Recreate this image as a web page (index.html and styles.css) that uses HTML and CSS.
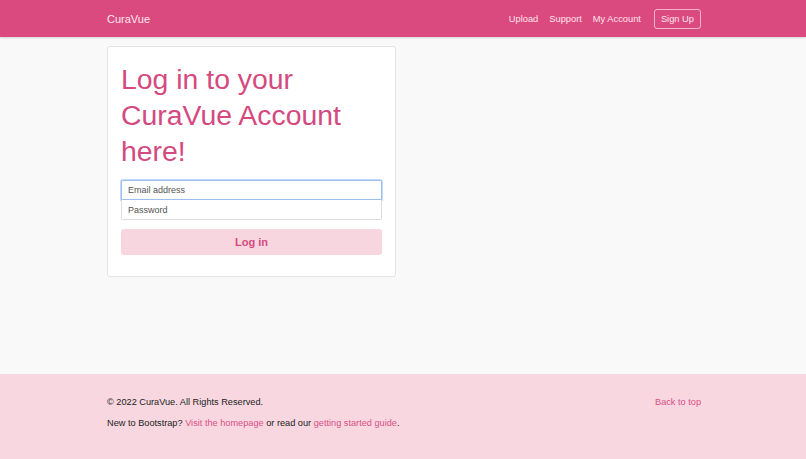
FILE: index.html
```html
<!DOCTYPE html>
<html lang="en">
<head>
    <meta charset="UTF-8">
    <meta name="viewport" content="width=device-width, initial-scale=1.0">
    <title>CuraVue - Log in</title>
    <link rel="stylesheet" href="styles.css">
</head>
<body>
    <header class="navbar">
        <div class="wrap nav-inner">
            <a class="brand" href="#">CuraVue</a>
            <nav class="nav-links">
                <a href="#">Upload</a>
                <a href="#">Support</a>
                <a href="#">My Account</a>
                <a class="signup" href="#">Sign Up</a>
            </nav>
        </div>
    </header>

    <main class="page">
        <div class="wrap">
            <div class="card">
                <h1>Log in to your CuraVue Account here!</h1>
                <form class="login-form">
                    <input type="email" class="field focused" placeholder="Email address">
                    <input type="password" class="field" placeholder="Password">
                    <button type="button" class="login-btn">Log in</button>
                </form>
            </div>
        </div>
    </main>

    <footer class="footer">
        <div class="wrap">
            <p class="top-line">
                <span>&copy; 2022 CuraVue. All Rights Reserved.</span>
                <a href="#">Back to top</a>
            </p>
            <p>New to Bootstrap? <a href="#">Visit the homepage</a> or read our <a href="#">getting started guide</a>.</p>
        </div>
    </footer>
</body>
</html>
```

FILE: styles.css
```css
* {
    box-sizing: border-box;
}
body {
    margin: 0;
    font-family: "Liberation Sans", Arial, sans-serif;
    background-color: #f9f9f9;
    color: #212529;
}
a {
    text-decoration: none;
}
.wrap {
    width: 596px;
    padding-left: 2px;
    margin: 0 auto;
}
.navbar {
    background-color: #db4a7f;
    height: 37px;
    box-shadow: 0 1px 2px rgba(0, 0, 0, 0.15);
}
.nav-inner {
    height: 37px;
    display: flex;
    align-items: center;
    justify-content: space-between;
}
.brand {
    color: #fde8ef;
    font-size: 11px;
}
.nav-links {
    display: flex;
    align-items: center;
    gap: 11px;
}
.nav-links a {
    color: #fbe3ec;
    font-size: 9.3px;
}
.nav-links .signup {
    margin-left: 2px;
    height: 20px;
    display: flex;
    align-items: center;
    border: 1px solid #f3b3ca;
    border-radius: 3px;
    padding: 0 6px;
}
.page {
    height: 337px;
    padding-top: 9px;
}
.card {
    width: 289px;
    background: #fff;
    border: 1px solid #e4e4e4;
    border-radius: 3px;
    padding: 14px 13px 21px;
}
.card h1 {
    margin: 0 0 11px;
    font-weight: 400;
    font-size: 28.4px;
    line-height: 36px;
    color: #d44a80;
}
.login-form {
    display: flex;
    flex-direction: column;
}
.field {
    height: 20px;
    border: 1px solid #ddd;
    padding: 0 6px;
    font-family: inherit;
    font-size: 9px;
    color: #555;
    background: #fff;
    outline: none;
}
.field::placeholder {
    color: #555;
}
.field.focused {
    border-color: #9ec0f0;
    box-shadow: 0 0 0 1px #c4d9f8;
    border-radius: 2px 2px 0 0;
}
.field + .field {
    border-top: none;
    border-radius: 0 0 2px 2px;
}
.login-btn {
    margin-top: 9px;
    height: 26px;
    border: none;
    border-radius: 3px;
    background-color: #f8d6e0;
    color: #d44a80;
    font-family: inherit;
    font-weight: 700;
    font-size: 11px;
}
.footer {
    background-color: #f8d7e0;
    padding: 23px 0 25px;
    font-size: 9.2px;
    color: #222;
}
.footer p {
    margin: 0 0 10px;
    line-height: 11px;
}
.footer .top-line {
    display: flex;
    justify-content: space-between;
}
.footer a {
    color: #d94f86;
}
```
